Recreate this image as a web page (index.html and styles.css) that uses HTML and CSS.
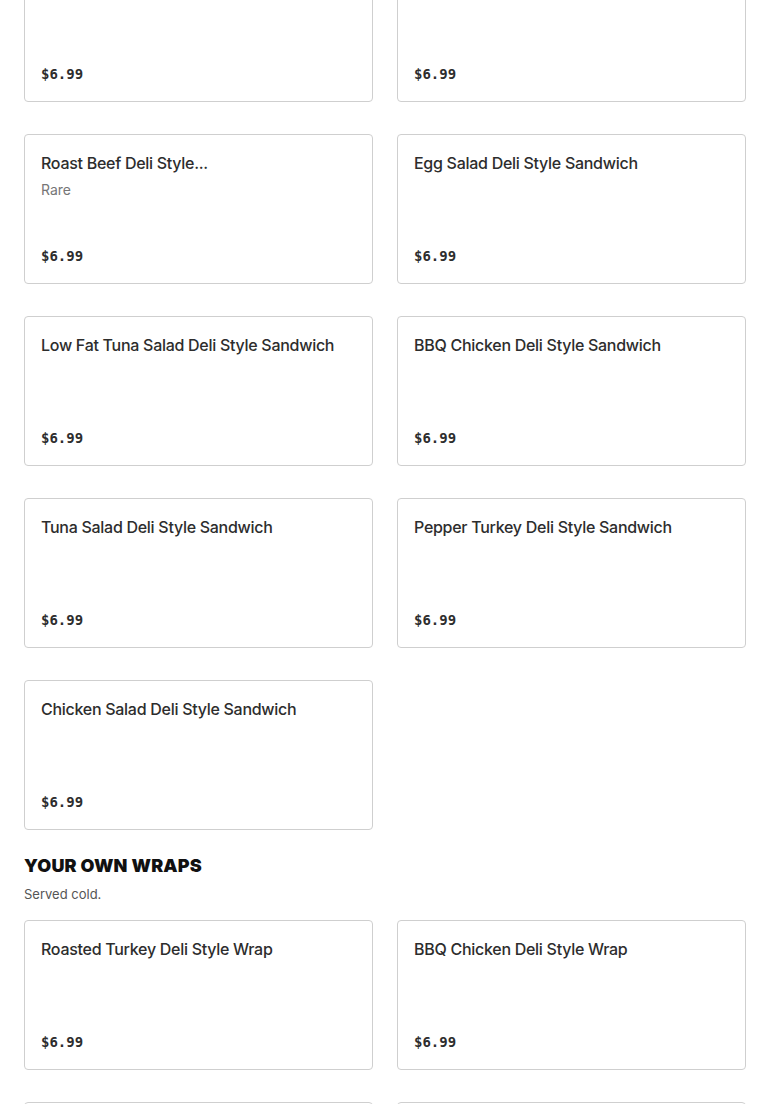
FILE: index.html
```html
<!DOCTYPE html>
<html>
<head>
<meta charset="utf-8">
<link rel="stylesheet" href="styles.css">
</head>
<body>
<main class="menu">
  <section class="section section-first">
    <div class="grid">
      <div class="card"><div class="card-info"><div class="title">Turkey Deli Style Sandwich</div></div><div class="price">$6.99</div></div>
      <div class="card"><div class="card-info"><div class="title">Ham Deli Style Sandwich</div></div><div class="price">$6.99</div></div>
      <div class="card"><div class="card-info"><div class="title">Roast Beef Deli Style...</div><div class="desc">Rare</div></div><div class="price">$6.99</div></div>
      <div class="card"><div class="card-info"><div class="title">Egg Salad Deli Style Sandwich</div></div><div class="price">$6.99</div></div>
      <div class="card"><div class="card-info"><div class="title">Low Fat Tuna Salad Deli Style Sandwich</div></div><div class="price">$6.99</div></div>
      <div class="card"><div class="card-info"><div class="title">BBQ Chicken Deli Style Sandwich</div></div><div class="price">$6.99</div></div>
      <div class="card"><div class="card-info"><div class="title">Tuna Salad Deli Style Sandwich</div></div><div class="price">$6.99</div></div>
      <div class="card"><div class="card-info"><div class="title">Pepper Turkey Deli Style Sandwich</div></div><div class="price">$6.99</div></div>
      <div class="card"><div class="card-info"><div class="title">Chicken Salad Deli Style Sandwich</div></div><div class="price">$6.99</div></div>
    </div>
  </section>
  <section class="section">
    <h2 class="section-title">YOUR OWN WRAPS</h2>
    <p class="section-sub">Served cold.</p>
    <div class="grid">
      <div class="card"><div class="card-info"><div class="title">Roasted Turkey Deli Style Wrap</div></div><div class="price">$6.99</div></div>
      <div class="card"><div class="card-info"><div class="title">BBQ Chicken Deli Style Wrap</div></div><div class="price">$6.99</div></div>
      <div class="card"><div class="card-info"><div class="title">Egg Salad Deli Style Wrap</div></div><div class="price">$6.99</div></div>
      <div class="card"><div class="card-info"><div class="title">Tuna Salad Deli Style Wrap</div></div><div class="price">$6.99</div></div>
    </div>
  </section>
</main>
</body>
</html>
```

FILE: styles.css
```css
* { box-sizing: border-box; }
html, body { margin: 0; padding: 0; background: #fff; }
body { font-family: Inter, "Noto Sans", "Liberation Sans", sans-serif; color: #2d2d2d; overflow: hidden; }
.menu { padding: 0 24px; margin-top: -48px; }
.section { display: flex; flex-direction: column; }
.section-first { margin-bottom: 24px; }
.grid { display: grid; grid-template-columns: 1fr 1fr; column-gap: 24px; row-gap: 32px; }
.card {
  height: 150px;
  border: 1px solid #cfcfcf;
  border-radius: 4px;
  padding: 16px 16px 17px;
  display: flex;
  flex-direction: column;
  justify-content: space-between;
  background: #fff;
}
.title { font-size: 16px; font-weight: 500; line-height: 24px; color: #2d2d2d; letter-spacing: -0.28px; }
.desc { font-size: 14px; line-height: 20px; color: #767676; margin-top: 5px; }
.price { font-family: "DejaVu Sans Mono", "Liberation Mono", monospace; font-weight: bold; font-size: 14px; line-height: 20px; color: #2d2d2d; }
.section-title { margin: 0; font-size: 18px; line-height: 24px; font-weight: 900; color: #111; letter-spacing: 0.2px; }
.section-sub { margin: 6px 0 16px; font-size: 13px; line-height: 20px; color: #555; }
```
